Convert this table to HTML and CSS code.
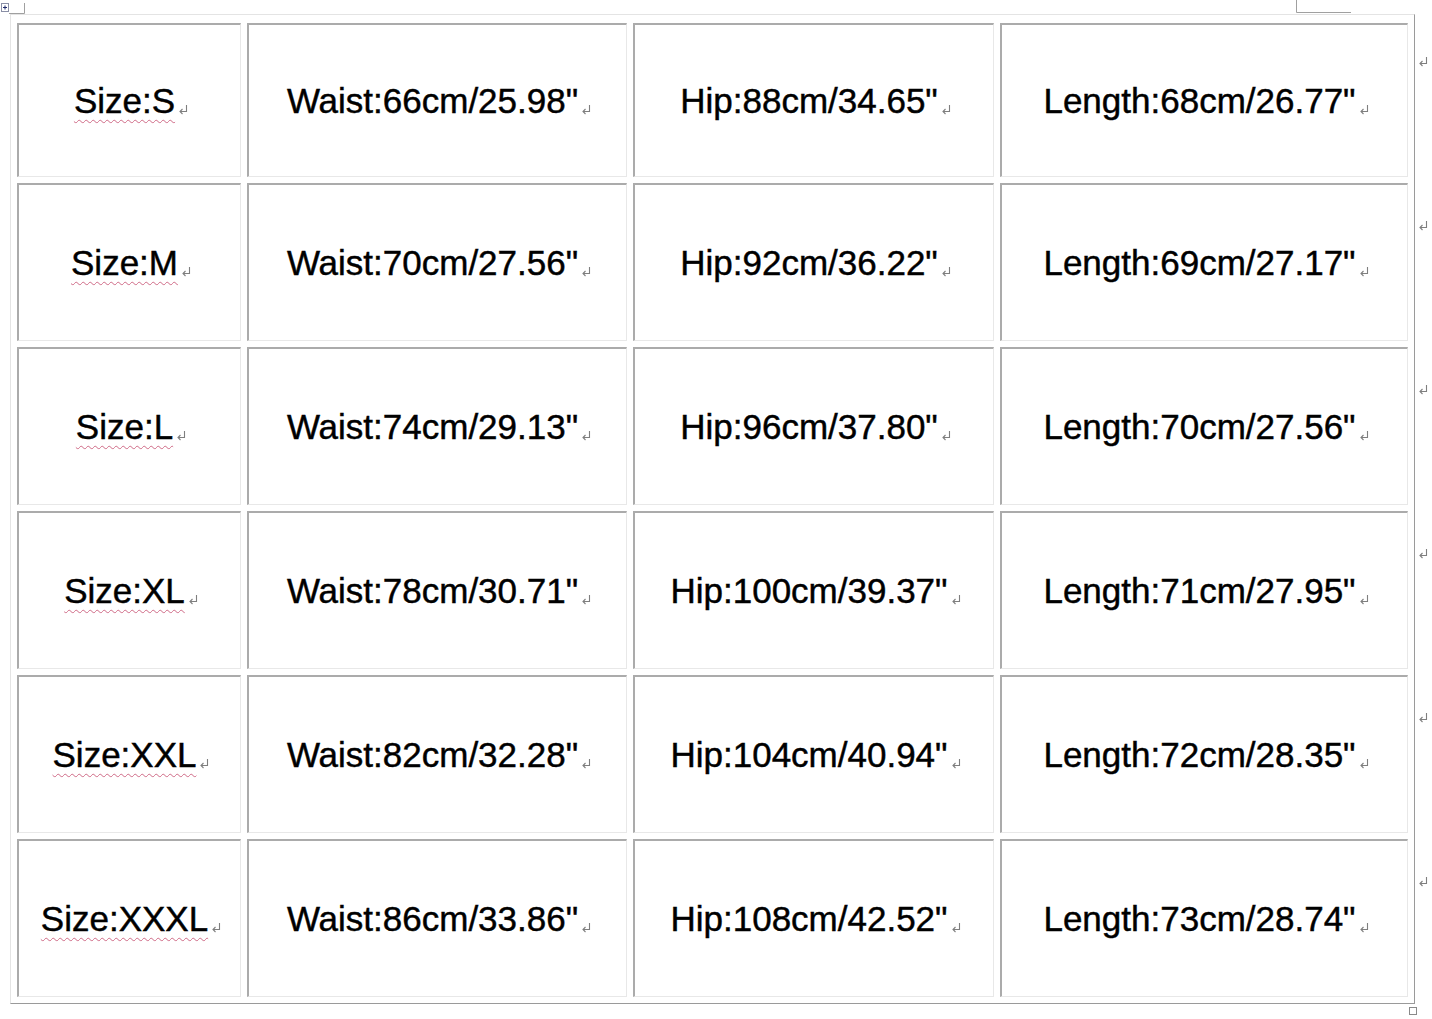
FILE: index.html
```html
<!DOCTYPE html>
<html lang="en">
<head>
<meta charset="utf-8">
<title>Size chart</title>
<link rel="stylesheet" href="styles.css">
</head>
<body>
<div class="top-strip">
  <svg class="mark-tl" width="26" height="15" viewBox="0 0 26 15">
    <rect x="1.5" y="3.5" width="7" height="8" fill="#fff" stroke="#8a8fa6" stroke-width="1"/>
    <path d="M3 7.5 H7 M5 5.5 V9.5" stroke="#1f2a6a" stroke-width="1"/>
    <path d="M9 13.5 H24.5 V3" fill="none" stroke="#a0a0a0" stroke-width="1"/>
  </svg>
  <svg class="mark-tr" width="56" height="15" viewBox="0 0 56 15">
    <path d="M0.5 0 V12.5 H55" fill="none" stroke="#a0a0a0" stroke-width="1"/>
  </svg>
</div>

<div class="sheet">
  <table class="chart">
    <colgroup>
      <col class="c1"><col class="c2"><col class="c3"><col class="c4">
    </colgroup>
    <tr class="r1">
      <td><span class="sz">Size:S</span><svg class="pm" viewBox="0 0 10 11"><path d="M8.5 1 V7.5 H2 M4.5 5 L2 7.5 L4.5 10"/></svg></td>
      <td>Waist:66cm/25.98"<svg class="pm" viewBox="0 0 10 11"><path d="M8.5 1 V7.5 H2 M4.5 5 L2 7.5 L4.5 10"/></svg></td>
      <td>Hip:88cm/34.65"<svg class="pm" viewBox="0 0 10 11"><path d="M8.5 1 V7.5 H2 M4.5 5 L2 7.5 L4.5 10"/></svg></td>
      <td>Length:68cm/26.77"<svg class="pm" viewBox="0 0 10 11"><path d="M8.5 1 V7.5 H2 M4.5 5 L2 7.5 L4.5 10"/></svg></td>
    </tr>
    <tr>
      <td><span class="sz">Size:M</span><svg class="pm" viewBox="0 0 10 11"><path d="M8.5 1 V7.5 H2 M4.5 5 L2 7.5 L4.5 10"/></svg></td>
      <td>Waist:70cm/27.56"<svg class="pm" viewBox="0 0 10 11"><path d="M8.5 1 V7.5 H2 M4.5 5 L2 7.5 L4.5 10"/></svg></td>
      <td>Hip:92cm/36.22"<svg class="pm" viewBox="0 0 10 11"><path d="M8.5 1 V7.5 H2 M4.5 5 L2 7.5 L4.5 10"/></svg></td>
      <td>Length:69cm/27.17"<svg class="pm" viewBox="0 0 10 11"><path d="M8.5 1 V7.5 H2 M4.5 5 L2 7.5 L4.5 10"/></svg></td>
    </tr>
    <tr>
      <td><span class="sz">Size:L</span><svg class="pm" viewBox="0 0 10 11"><path d="M8.5 1 V7.5 H2 M4.5 5 L2 7.5 L4.5 10"/></svg></td>
      <td>Waist:74cm/29.13"<svg class="pm" viewBox="0 0 10 11"><path d="M8.5 1 V7.5 H2 M4.5 5 L2 7.5 L4.5 10"/></svg></td>
      <td>Hip:96cm/37.80"<svg class="pm" viewBox="0 0 10 11"><path d="M8.5 1 V7.5 H2 M4.5 5 L2 7.5 L4.5 10"/></svg></td>
      <td>Length:70cm/27.56"<svg class="pm" viewBox="0 0 10 11"><path d="M8.5 1 V7.5 H2 M4.5 5 L2 7.5 L4.5 10"/></svg></td>
    </tr>
    <tr>
      <td><span class="sz">Size:XL</span><svg class="pm" viewBox="0 0 10 11"><path d="M8.5 1 V7.5 H2 M4.5 5 L2 7.5 L4.5 10"/></svg></td>
      <td>Waist:78cm/30.71"<svg class="pm" viewBox="0 0 10 11"><path d="M8.5 1 V7.5 H2 M4.5 5 L2 7.5 L4.5 10"/></svg></td>
      <td>Hip:100cm/39.37"<svg class="pm" viewBox="0 0 10 11"><path d="M8.5 1 V7.5 H2 M4.5 5 L2 7.5 L4.5 10"/></svg></td>
      <td>Length:71cm/27.95"<svg class="pm" viewBox="0 0 10 11"><path d="M8.5 1 V7.5 H2 M4.5 5 L2 7.5 L4.5 10"/></svg></td>
    </tr>
    <tr>
      <td><span class="sz">Size:XXL</span><svg class="pm" viewBox="0 0 10 11"><path d="M8.5 1 V7.5 H2 M4.5 5 L2 7.5 L4.5 10"/></svg></td>
      <td>Waist:82cm/32.28"<svg class="pm" viewBox="0 0 10 11"><path d="M8.5 1 V7.5 H2 M4.5 5 L2 7.5 L4.5 10"/></svg></td>
      <td>Hip:104cm/40.94"<svg class="pm" viewBox="0 0 10 11"><path d="M8.5 1 V7.5 H2 M4.5 5 L2 7.5 L4.5 10"/></svg></td>
      <td>Length:72cm/28.35"<svg class="pm" viewBox="0 0 10 11"><path d="M8.5 1 V7.5 H2 M4.5 5 L2 7.5 L4.5 10"/></svg></td>
    </tr>
    <tr>
      <td><span class="sz">Size:XXXL</span><svg class="pm" viewBox="0 0 10 11"><path d="M8.5 1 V7.5 H2 M4.5 5 L2 7.5 L4.5 10"/></svg></td>
      <td>Waist:86cm/33.86"<svg class="pm" viewBox="0 0 10 11"><path d="M8.5 1 V7.5 H2 M4.5 5 L2 7.5 L4.5 10"/></svg></td>
      <td>Hip:108cm/42.52"<svg class="pm" viewBox="0 0 10 11"><path d="M8.5 1 V7.5 H2 M4.5 5 L2 7.5 L4.5 10"/></svg></td>
      <td>Length:73cm/28.74"<svg class="pm" viewBox="0 0 10 11"><path d="M8.5 1 V7.5 H2 M4.5 5 L2 7.5 L4.5 10"/></svg></td>
    </tr>
  </table>

  <div class="row-marks">
    <svg class="rm" viewBox="0 0 10 11"><path d="M8.5 1 V7.5 H2 M4.5 5 L2 7.5 L4.5 10"/></svg>
    <svg class="rm" viewBox="0 0 10 11"><path d="M8.5 1 V7.5 H2 M4.5 5 L2 7.5 L4.5 10"/></svg>
    <svg class="rm" viewBox="0 0 10 11"><path d="M8.5 1 V7.5 H2 M4.5 5 L2 7.5 L4.5 10"/></svg>
    <svg class="rm" viewBox="0 0 10 11"><path d="M8.5 1 V7.5 H2 M4.5 5 L2 7.5 L4.5 10"/></svg>
    <svg class="rm" viewBox="0 0 10 11"><path d="M8.5 1 V7.5 H2 M4.5 5 L2 7.5 L4.5 10"/></svg>
    <svg class="rm" viewBox="0 0 10 11"><path d="M8.5 1 V7.5 H2 M4.5 5 L2 7.5 L4.5 10"/></svg>
  </div>
</div>

<div class="bottom-strip">
  <div class="resize-handle"></div>
</div>
</body>
</html>
```

FILE: styles.css
```css
html, body {
  margin: 0;
  padding: 0;
  background: #ffffff;
}

body {
  width: 1432px;
  height: 1019px;
  overflow: hidden;
  font-family: "Liberation Sans", Arial, sans-serif;
  color: #000;
}

.top-strip {
  display: flex;
  align-items: flex-start;
  height: 14px;
}

.mark-tl {
  display: block;
  height: 15px;
}

.mark-tr {
  display: block;
  margin-left: auto;
  margin-right: 80px;
}

.sheet {
  display: flex;
  align-items: flex-start;
}

.chart {
  margin-left: 10px;
  table-layout: fixed;
  width: 1405px;
  border-collapse: separate;
  border-spacing: 6px;
  padding-top: 2px;
  border-top: 1px solid #e4e4e4;
  border-left: 1px solid #e4e4e4;
  border-right: 1px solid #9a9a9a;
  border-bottom: 1px solid #9a9a9a;
}

.c1 { width: 224px; }
.c2 { width: 380px; }
.c3 { width: 361px; }
.c4 { width: 408px; }

.chart td {
  box-sizing: border-box;
  height: 158px;
  padding: 0 0 0 3px;
  text-align: center;
  vertical-align: middle;
  font-size: 35px;
  line-height: 40px;
  white-space: nowrap;
  -webkit-text-stroke: 0.45px #000;
  border-top: 2px solid #ababab;
  border-left: 2px solid #ababab;
  border-right: 1px solid #e8e8e8;
  border-bottom: 1px solid #e8e8e8;
}

.chart .r1 td {
  height: 154px;
}

.sz {
  text-decoration: underline wavy #cf6a86 1px;
  text-underline-offset: 6px;
}

.pm {
  display: inline-block;
  width: 10px;
  height: 11px;
  margin-left: 3px;
  vertical-align: -2px;
}

.pm path,
.rm path {
  fill: none;
  stroke: #7f7f7f;
  stroke-width: 1.1;
}

.row-marks {
  display: flex;
  flex-direction: column;
  gap: 153px;
  margin-top: 42px;
  margin-left: 3px;
}

.rm {
  display: block;
  width: 10px;
  height: 11px;
}

.bottom-strip {
  display: flex;
  padding-left: 1409px;
  padding-top: 3px;
}

.resize-handle {
  box-sizing: border-box;
  width: 8px;
  height: 8px;
  border: 1px solid #8a8a8a;
  background: #fff;
}
```
